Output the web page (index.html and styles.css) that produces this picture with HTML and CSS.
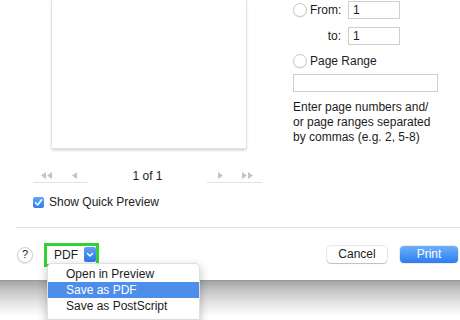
FILE: index.html
```html
<!DOCTYPE html>
<html>
<head>
<meta charset="utf-8">
<link rel="stylesheet" href="styles.css">
</head>
<body>
<div class="dialog">
  <div class="main">
    <div class="left">
      <div class="page"></div>
      <div class="nav">
        <div class="seg">
          <span class="navbtn"><svg width="12" height="7" viewBox="0 0 12 7"><path d="M0 3.5L5 0v7z M6 3.5L11 0v7z" fill="#c4c4c4"/></svg></span>
          <span class="navbtn"><svg width="5" height="7" viewBox="0 0 5 7"><path d="M0 3.5L5 0v7z" fill="#c4c4c4"/></svg></span>
        </div>
        <div class="pagecount">1 of 1</div>
        <div class="seg">
          <span class="navbtn"><svg width="5" height="7" viewBox="0 0 5 7"><path d="M5 3.5L0 0v7z" fill="#c4c4c4"/></svg></span>
          <span class="navbtn"><svg width="12" height="7" viewBox="0 0 12 7"><path d="M5 3.5L0 0v7z M11 3.5L6 0v7z" fill="#c4c4c4"/></svg></span>
        </div>
      </div>
      <div class="check">
        <span class="box"><svg width="11" height="11" viewBox="0 0 11 11"><path d="M2.5 5.8L4.6 8 8.6 2.8" fill="none" stroke="#fff" stroke-width="1.6" stroke-linecap="round" stroke-linejoin="round"/></svg></span>
        <span>Show Quick Preview</span>
      </div>
    </div>
    <div class="options">
      <div class="row">
        <span class="radio"></span>
        <span class="lbl">From:</span>
        <span class="field">1</span>
      </div>
      <div class="row row-to">
        <span class="radio hidden"></span>
        <span class="lbl">to:</span>
        <span class="field">1</span>
      </div>
      <div class="row row-range">
        <span class="radio"></span>
        <span class="lbl-range">Page Range</span>
      </div>
      <div class="field wide"></div>
      <p class="hint">Enter page numbers and/<br>or page ranges separated<br>by commas (e.g. 2, 5-8)</p>
    </div>
  </div>
  <div class="sep"></div>
  <div class="bar">
    <span class="help">?</span>
    <div class="pdf-hl">
      <span class="pdf-text">PDF</span>
      <span class="chev"><svg width="12" height="15" viewBox="0 0 12 15"><path d="M3.5 6.5L6 9 8.5 6.5" fill="none" stroke="#fff" stroke-width="1.5" stroke-linecap="round" stroke-linejoin="round"/></svg></span>
    </div>
    <button class="btn cancel">Cancel</button>
    <button class="btn print">Print</button>
  </div>
  <div class="menu">
    <div class="item">Open in Preview</div>
    <div class="item active">Save as PDF</div>
    <div class="item">Save as PostScript</div>
    <div class="menu-sep"></div>
  </div>
</div>
<div class="desk-shadow"></div>
</body>
</html>
```

FILE: styles.css
```css
* { box-sizing: border-box; }
html, body {
  margin: 0;
  padding: 0;
  width: 460px;
  height: 320px;
  overflow: hidden;
  background: #fff;
  font-family: "Liberation Sans", Arial, sans-serif;
  font-size: 12px;
  color: #1c1c1c;
}
.dialog {
  position: relative;
  width: 460px;
  height: 281px;
  background: #fff;
  border-bottom: 1px solid #9a9a9a;
}
.main {
  display: flex;
  height: 227px;
}
.left {
  width: 293px;
  flex: none;
}
.page {
  margin-left: 52px;
  width: 194px;
  height: 148px;
  background: #fff;
  box-shadow: 0 0 0 1px #e4e4e4, 0 2px 3px rgba(0,0,0,0.22);
}
.nav {
  display: flex;
  align-items: center;
  margin-top: 20px;
  margin-left: 33px;
  width: 229px;
  height: 15px;
}
.seg {
  display: flex;
  width: 55px;
  height: 15px;
  border-bottom: 1px solid #e2e2e2;
}
.navbtn {
  flex: 1;
  display: flex;
  align-items: center;
  justify-content: center;
}
.pagecount {
  flex: 1;
  text-align: center;
  line-height: 15px;
  padding-top: 1px;
}
.check {
  display: flex;
  align-items: center;
  margin-top: 12px;
  margin-left: 33px;
  height: 14px;
  gap: 5px;
}
.box {
  width: 11px;
  height: 11px;
  border-radius: 2px;
  background: linear-gradient(#62a6f8, #2f7fee);
  display: flex;
}
.options {
  flex: 1;
  padding-top: 1px;
}
.row {
  display: flex;
  align-items: center;
  height: 18px;
}
.row-to { margin-top: 8px; }
.row-range { margin-top: 9px; height: 14px; }
.radio {
  width: 14px;
  height: 14px;
  border-radius: 50%;
  background: #fff;
  border: 1px solid #c9c9c9;
  box-shadow: 0 1px 1px rgba(0,0,0,0.08);
  flex: none;
}
.radio.hidden { visibility: hidden; }
.lbl {
  width: 31px;
  margin-left: 3px;
  text-align: right;
}
.lbl-range { margin-left: 3px; }
.field {
  display: block;
  margin-left: 7px;
  width: 52px;
  height: 18px;
  border: 1px solid #cfcfcf;
  background: #fff;
  padding-left: 4px;
  line-height: 17px;
}
.field.wide {
  margin: 6px 0 0 0;
  width: 145px;
}
.hint {
  margin: 8px 0 0 0;
  line-height: 15px;
}
.sep {
  margin-left: 16px;
  height: 1px;
  background: #dedede;
}
.bar {
  display: flex;
  align-items: center;
  height: 53px;
  padding-left: 17px;
  padding-right: 2px;
}
.help {
  width: 16px;
  height: 16px;
  border-radius: 50%;
  border: 1px solid #d0d0d0;
  box-shadow: 0 1px 1px rgba(0,0,0,0.12);
  display: flex;
  align-items: center;
  justify-content: center;
  font-size: 11px;
  line-height: 1;
}
.pdf-hl {
  display: flex;
  align-items: center;
  margin-left: 11px;
  width: 55px;
  height: 24px;
  border: 3px solid #34d134;
  background: #fff;
}
.pdf-text {
  flex: 1;
  padding-left: 7px;
}
.chev {
  width: 12px;
  height: 15px;
  background: linear-gradient(#5a9ff6, #2b79ea);
  border-radius: 2px;
  display: flex;
}
.btn {
  font-family: inherit;
  font-size: 12px;
  height: 17px;
  width: 60px;
  padding: 0;
  border: none;
  border-radius: 4px;
  line-height: 17px;
}
.cancel {
  margin-left: auto;
  background: #fff;
  color: #1c1c1c;
  box-shadow: 0 0 0 0.5px rgba(0,0,0,0.18), 0 1px 1px rgba(0,0,0,0.18);
}
.print {
  margin-left: 13px;
  width: 58px;
  color: #fff;
  background: linear-gradient(#6cb0fb, #2d7cf0);
  box-shadow: 0 0 0 0.5px rgba(0,0,0,0.15);
}
.menu {
  position: absolute;
  left: 47px;
  top: 263px;
  width: 153px;
  height: 70px;
  padding-top: 2px;
  background: #fff;
  border: 1px solid rgba(0,0,0,0.12);
  border-radius: 5px 5px 0 0;
  box-shadow: 0 3px 10px rgba(0,0,0,0.25);
  z-index: 2;
}
.item {
  height: 16px;
  line-height: 16px;
  padding-left: 18px;
}
.item.active {
  background: #4c8eea;
  color: #fff;
}
.menu-sep {
  margin-top: 5px;
  height: 1px;
  background: #dcdcdc;
}
.desk-shadow {
  height: 39px;
  background: linear-gradient(#a4a4a4, #c6c6c6 25%, #e8e8e8 60%, #fff 90%);
}
```
